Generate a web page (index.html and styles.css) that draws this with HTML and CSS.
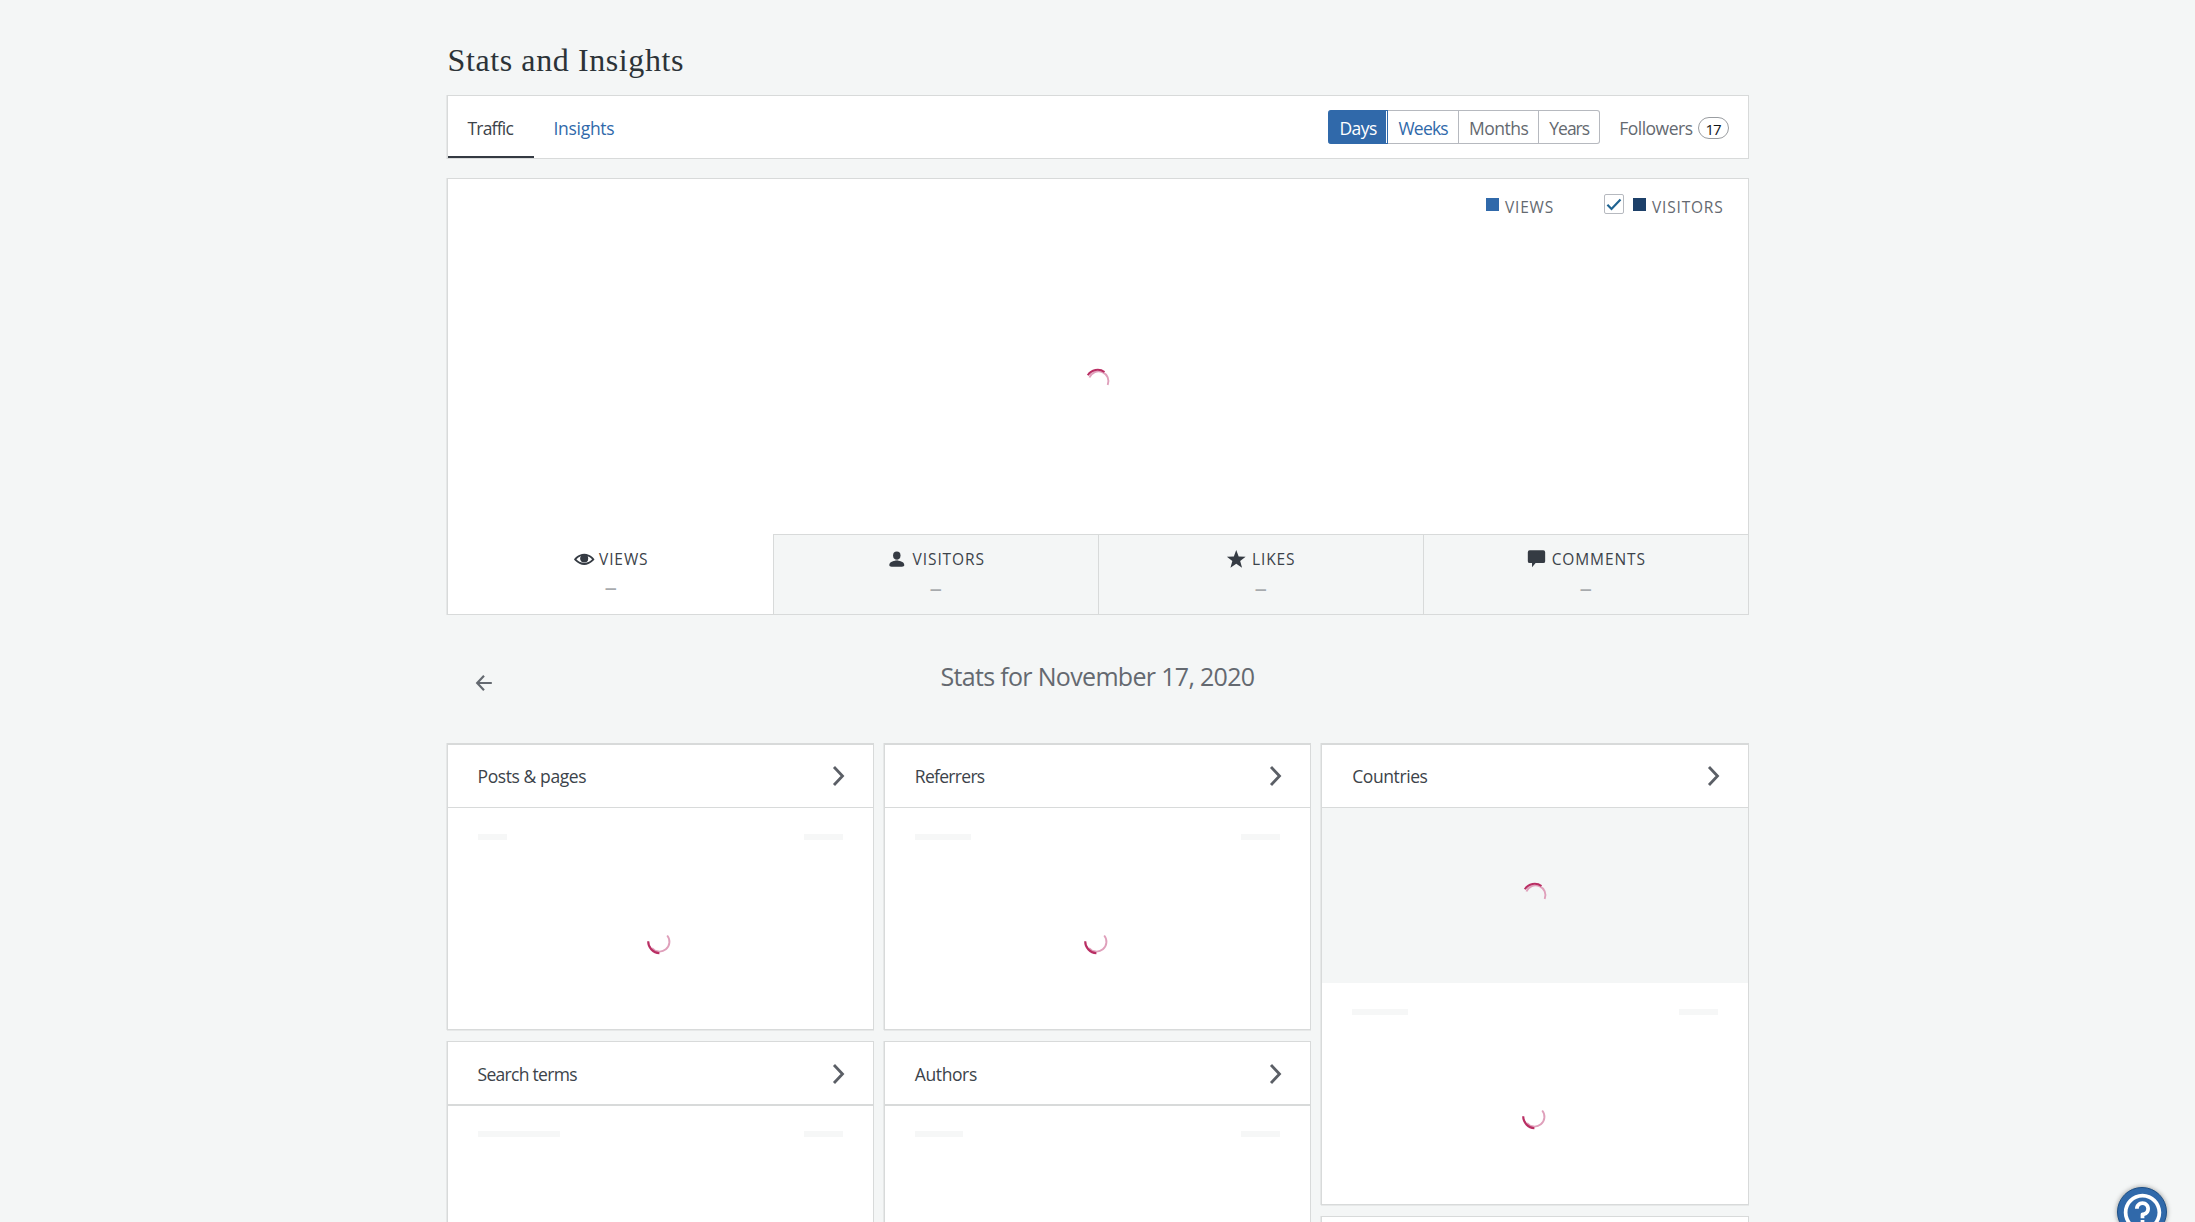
FILE: index.html
```html
<!DOCTYPE html>
<html lang="en">
<head>
    <meta charset="UTF-8">
    <meta name="viewport" content="width=device-width, initial-scale=1.0">
    <title>Stats and Insights</title>
    <link rel="stylesheet" href="styles.css">
</head>
<body>
<!-- Shared icons -->
<svg class="sprite" aria-hidden="true">
    <symbol id="chevron" viewBox="0 0 14 22">
        <path d="M2 2l8.5 9L2 20" fill="none" stroke="currentColor" stroke-width="2.8"/>
    </symbol>
    <symbol id="spinner-top" viewBox="0 0 32 32">
        <path d="M7.5 11.5A9.6 9.6 0 0 1 25.7 19" fill="none" stroke="#dfa0bb" stroke-width="1.9"/>
        <path d="M5.8 9.3A11.7 11.7 0 0 1 22.5 6" fill="none" stroke="#b92e63" stroke-width="2.1"/>
    </symbol>
    <symbol id="spinner-bottom" viewBox="0 0 32 32">
        <path d="M23.2 9.5A9.7 9.7 0 0 1 8 22" fill="none" stroke="#dfa0bb" stroke-width="1.9"/>
        <path d="M4.2 15.2A11.9 11.9 0 0 0 15.4 27.2" fill="none" stroke="#b92e63" stroke-width="2.1"/>
    </symbol>
</svg>

<main>
    <h1>Stats and Insights</h1>

    <nav class="stats-nav">
        <a class="tab active" href="#">Traffic</a>
        <a class="tab" href="#">Insights</a>
        <div class="periods">
            <a class="period days" href="#">Days</a>
            <a class="period weeks" href="#">Weeks</a>
            <a class="period months" href="#">Months</a>
            <a class="period years" href="#">Years</a>
        </div>
        <a class="followers" href="#">Followers <span class="count">17</span></a>
    </nav>

    <!-- Chart -->
    <section class="chart">
        <div class="legend">
            <span class="swatch views"></span>
            <span class="legend-label">Views</span>
            <span class="checkbox">
                <svg width="18" height="18" viewBox="0 0 18 18"><path d="M2.4 9.8l4.1 4.2 9-9.6" fill="none" stroke="#1f6391" stroke-width="2.2"/></svg>
            </span>
            <span class="swatch visitors"></span>
            <span class="legend-label">Visitors</span>
        </div>
        <svg class="spinner"><use href="#spinner-top"/></svg>

        <ul class="totals">
            <li class="selected">
                <span class="total-label">
                    <svg viewBox="0 0 24 24"><path fill-rule="evenodd" d="M12 6C5.2 6 1 12 1 12s4.2 6 11 6 11-6 11-6-4.2-6-11-6zM12 16c-3.9 0-6.9-2.5-8.4-4 1.1-1.1 2.9-2.7 5.3-3.5-.6.7-.9 1.5-.9 2.3a4 4 0 0 0 8 0c0-.8-.3-1.6-.9-2.3 2.4.8 4.2 2.4 5.3 3.5-1.5 1.5-4.5 4-8.4 4z"/><circle cx="12" cy="11.3" r="4.2"/></svg>
                    Views
                </span>
                <span class="value">–</span>
            </li>
            <li>
                <span class="total-label">
                    <svg viewBox="0 0 24 24"><ellipse cx="11.5" cy="8" rx="4" ry="4.3"/><path d="M10 12h3v2h-3z" opacity=".45"/><path d="M3.5 18.2c0-3 3-4.7 8-4.7s8 1.7 8 4.7c0 1.2-1 1.8-2.5 1.8H6c-1.5 0-2.5-.6-2.5-1.8z"/></svg>
                    Visitors
                </span>
                <span class="value">–</span>
            </li>
            <li>
                <span class="total-label">
                    <svg viewBox="0 0 24 24"><path d="M12 2l2.58 6.95L22 9.26l-5.82 4.6L18.18 21 12 16.89 5.82 21l2-7.14L2 9.26l7.42-.31z"/></svg>
                    Likes
                </span>
                <span class="value">–</span>
            </li>
            <li>
                <span class="total-label">
                    <svg viewBox="0 0 24 24"><path d="M5 2.5h14.5a2 2 0 0 1 2 2V14a2 2 0 0 1-2 2h-8.2L7.5 20.5V16H5a2 2 0 0 1-2-2V4.5a2 2 0 0 1 2-2z"/></svg>
                    Comments
                </span>
                <span class="value">–</span>
            </li>
        </ul>
    </section>

    <div class="date-nav">
        <svg class="arrow" width="18" height="18" viewBox="0 0 18 18"><path d="M9 1.8L2.2 9 9 16.2M2.2 9h14.6" fill="none" stroke="currentColor" stroke-width="2.2"/></svg>
        <h2>Stats for November 17, 2020</h2>
    </div>

    <!-- Modules -->
    <div class="modules">
        <div class="column">
            <section class="card first">
                <h3>Posts &amp; pages <svg class="chevron"><use href="#chevron"/></svg></h3>
                <div class="placeholder"><span class="posts"></span><span></span></div>
                <svg class="spinner"><use href="#spinner-bottom"/></svg>
            </section>
            <section class="card second">
                <h3 class="narrow">Search terms <svg class="chevron"><use href="#chevron"/></svg></h3>
                <div class="placeholder"><span class="search"></span><span></span></div>
            </section>
        </div>
        <div class="column">
            <section class="card first">
                <h3 class="narrow">Referrers <svg class="chevron"><use href="#chevron"/></svg></h3>
                <div class="placeholder"><span class="referrers"></span><span></span></div>
                <svg class="spinner"><use href="#spinner-bottom"/></svg>
            </section>
            <section class="card second">
                <h3>Authors <svg class="chevron"><use href="#chevron"/></svg></h3>
                <div class="placeholder"><span class="authors"></span><span></span></div>
            </section>
        </div>
        <div class="column">
            <section class="card first countries">
                <h3>Countries <svg class="chevron"><use href="#chevron"/></svg></h3>
                <div class="map"><svg class="spinner"><use href="#spinner-top"/></svg></div>
                <div class="placeholder"><span class="referrers"></span><span></span></div>
                <svg class="spinner"><use href="#spinner-bottom"/></svg>
            </section>
            <section class="card second"></section>
        </div>
    </div>
</main>

<a class="help" href="#" aria-label="Help">
    <svg width="45" height="45" viewBox="0 0 24 24"><path d="M12 4c4.411 0 8 3.589 8 8s-3.589 8-8 8-8-3.589-8-8 3.589-8 8-8m0-2C6.477 2 2 6.477 2 12s4.477 10 10 10 10-4.477 10-10S17.523 2 12 2zm4 8c0-2.21-1.79-4-4-4s-4 1.79-4 4h2c0-1.103.897-2 2-2s2 .897 2 2-.897 2-2 2c-.552 0-1 .448-1 1v2h2v-1.141A3.991 3.991 0 0 0 16 10zm-3 6h-2v2h2v-2z"/></svg>
</a>
</body>
</html>
```
FILE: styles.css
```css
* {
    box-sizing: border-box;
}

body {
    font-family: "Open Sans", "Noto Sans", sans-serif;
    font-size: 17.5px;
    letter-spacing: -0.5px;
    background-color: #f4f6f6;
    color: #3c434a;
    margin: 0;
    height: 1222px;
    overflow: hidden;
}

a {
    color: inherit;
    text-decoration: none;
}

.sprite {
    display: none;
}

main {
    width: 1302px;
    height: 1222px;
    margin: 0 auto;
    padding-top: 40px;
}

h1 {
    font-family: "Liberation Serif", serif;
    font-size: 32px;
    font-weight: normal;
    letter-spacing: 0.6px;
    line-height: 40px;
    margin: 0 0 15px;
    padding-left: 1px;
    color: #2c3338;
}

/* Navigation bar */
.stats-nav {
    display: flex;
    align-items: center;
    height: 64px;
    padding-right: 19px;
    background-color: #ffffff;
    border: 1px solid #d8dada;
    box-shadow: -1px 0 0 #e6e8e8;
}

.tab {
    height: 62px;
    padding: 0 20px;
    line-height: 64px;
    color: #3069aa;
    letter-spacing: -0.3px;
}

.tab.active {
    width: 86px;
    color: #3c434a;
    letter-spacing: -0.8px;
    border-bottom: 2px solid #343a42;
}

.periods {
    display: flex;
    margin-left: auto;
    height: 34px;
    border-radius: 3px;
}

.period {
    border: 1px solid #b6b9bf;
    border-left: 0;
    line-height: 35px;
    text-align: center;
    color: #646970;
}

.days {
    width: 60px;
    padding-left: 1px;
    background-color: #3069aa;
    border-color: #3069aa;
    box-shadow: inset -1px 0 0 #ffffff;
    border-radius: 3px 0 0 3px;
    color: #ffffff;
}

.weeks {
    width: 71px;
    color: #3069aa;
    letter-spacing: -0.8px;
}

.months {
    width: 80px;
}

.years {
    width: 61px;
    border-radius: 0 3px 3px 0;
    letter-spacing: -1px;
}

.followers {
    display: flex;
    align-items: center;
    gap: 5px;
    margin-left: 19px;
    padding-top: 2px;
    color: #646970;
}

.count {
    width: 31px;
    height: 22px;
    border: 1px solid #9a9da1;
    border-radius: 11px;
    font-size: 15px;
    font-weight: 500;
    line-height: 22px;
    letter-spacing: -1px;
    text-align: center;
    color: #101517;
}

/* Chart */
.chart {
    display: flex;
    flex-direction: column;
    height: 437px;
    margin-top: 19px;
    background-color: #ffffff;
    border: 1px solid #d8dada;
    box-shadow: -1px 0 0 #e6e8e8;
}

.spinner {
    display: block;
    width: 32px;
    height: 32px;
    margin: 0 auto;
}

.chart .spinner {
    margin-top: 148px;
}

.legend {
    display: flex;
    justify-content: flex-end;
    height: 39px;
    padding: 15px 24px 0 0;
}

.legend-label {
    font-size: 15.5px;
    line-height: 26px;
    letter-spacing: 0.8px;
    text-transform: uppercase;
    color: #646970;
}

.swatch {
    width: 13px;
    height: 13px;
    margin: 4px 6px 0 0;
    background-color: #3069aa;
}

.swatch.visitors {
    background-color: #1d4069;
}

.checkbox {
    width: 20px;
    height: 20px;
    margin: 0 9px 0 50px;
    border: 1px solid #b6b9bf;
    border-radius: 2px;
}

.checkbox svg {
    display: block;
}

.totals {
    display: grid;
    grid-template-columns: repeat(4, 1fr);
    height: 80px;
    margin: auto 0 0;
    padding: 0;
    list-style-type: none;
}

.totals li {
    padding-top: 13px;
    text-align: center;
    background-color: #f4f6f6;
    border-top: 1px solid #d8dada;
    border-left: 1px solid #d8dada;
}

.totals .selected {
    background-color: #ffffff;
    border-color: transparent;
}

.total-label {
    display: flex;
    justify-content: center;
    gap: 4px;
    font-size: 15.5px;
    line-height: 23px;
    letter-spacing: 0.9px;
    text-transform: uppercase;
}

.total-label svg {
    width: 22.5px;
    height: 22.5px;
    fill: #353b43;
}

.value {
    display: block;
    font-size: 25px;
    line-height: 32px;
    color: #a7aaad;
}

.selected .value {
    margin-top: -1px;
}

/* Date heading */
.date-nav {
    display: grid;
    grid-template-columns: 90px 1fr 90px;
    height: 128px;
    color: #646970;
}

.arrow {
    margin: 59px 0 0 28px;
}

h2 {
    margin: 41px 0 0;
    font-size: 25px;
    font-weight: normal;
    line-height: 40px;
    letter-spacing: -0.68px;
    text-align: center;
}

/* Modules */
.modules {
    display: grid;
    grid-template-columns: repeat(3, 1fr);
    gap: 10px;
}

.column {
    display: flex;
    flex-direction: column;
    gap: 11px;
}

.card {
    height: 287px;
    background-color: #ffffff;
    border: 1px solid #d8dada;
    box-shadow: -1px 0 0 #e6e8e8, 0 1px 0 #e6e8e8;
}

.card.first {
    border-top-width: 2px;
}

.card.countries {
    height: 462px;
}

h3 {
    display: flex;
    align-items: center;
    justify-content: space-between;
    height: 63px;
    margin: 0;
    padding: 0 27px 0 30px;
    font-size: 17.5px;
    font-weight: normal;
    letter-spacing: -0.4px;
    border-bottom: 1px solid #d8dada;
}

h3.narrow {
    letter-spacing: -0.7px;
}

.second h3 {
    height: 64px;
    padding-top: 2px;
    border-bottom-width: 2px;
}

.chevron {
    width: 14px;
    height: 22px;
    margin-bottom: 1px;
    color: #5b5f66;
}

.placeholder {
    display: flex;
    justify-content: space-between;
    padding: 26px 30px 0;
}

.second .placeholder {
    padding-top: 25px;
}

.placeholder span {
    width: 39px;
    height: 6px;
    background-color: #f6f7f7;
}

.placeholder .posts {
    width: 29px;
}

.placeholder .referrers {
    width: 56px;
}

.placeholder .search {
    width: 82px;
}

.placeholder .authors {
    width: 48px;
}

.card > .spinner {
    margin-top: 86px;
}

.map {
    display: flex;
    align-items: center;
    height: 175px;
    background-color: #f4f6f6;
}

/* Help button */
.help {
    position: fixed;
    left: 2117px;
    top: 1187px;
    display: flex;
    align-items: center;
    justify-content: center;
    width: 50px;
    height: 50px;
    border: 1px solid #1d4f85;
    border-radius: 50%;
    background-color: #3069aa;
    box-shadow: 0 0 5px rgba(0, 0, 0, 0.4);
}

.help svg {
    fill: #ffffff;
}
```
